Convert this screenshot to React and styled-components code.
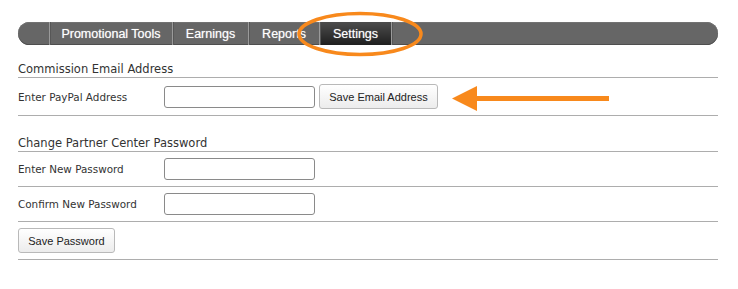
import React from "react";
import styled, { createGlobalStyle } from "styled-components";

const GlobalStyle = createGlobalStyle`
  body {
    margin: 0;
    background: #fff;
  }
`;

const Page = styled.div`
  position: relative;
  width: 700px;
  padding: 22px 20px 0 18px;
  font-family: "DejaVu Sans", Verdana, sans-serif;
  color: #333;
`;

const NavBar = styled.nav`
  display: flex;
  height: 23px;
  background: #666;
  border-radius: 12px;
  box-shadow: inset 0 -1px 0 #4e4e4e, inset 0 1px 0 #727272;
  overflow: hidden;
`;

const NavCap = styled.div`
  width: 31px;
  flex: none;
`;

const Tab = styled.div`
  box-sizing: border-box;
  width: ${(p) => p.$w}px;
  flex: none;
  display: flex;
  align-items: center;
  justify-content: center;
  border-left: 1px solid #9a9a9a;
  box-shadow: inset 1px 0 0 #575757;
  background: ${(p) =>
    p.$active ? "linear-gradient(#4d4d4d, #1f1f1f)" : "transparent"};
  color: #fff;
  font-family: "Liberation Sans", Arial, sans-serif;
  font-size: 12.5px;
  text-shadow: 0 0 1px rgba(255, 255, 255, 0.6);
`;

const TabEnd = styled.div`
  flex: 1;
  border-left: 1px solid #9a9a9a;
  box-shadow: inset 1px 0 0 #575757;
`;

const SectionTitle = styled.h2`
  margin: ${(p) => p.$top}px 0 0;
  height: 16px;
  line-height: 16px;
  font-size: 11.5px;
  font-weight: normal;
  border-bottom: 1px solid #adadad;
`;

const Row = styled.div`
  display: flex;
  align-items: center;
  height: ${(p) => p.$h}px;
  border-bottom: 1px solid #adadad;
`;

const Label = styled.label`
  width: 146px;
  flex: none;
  font-size: 10.4px;
`;

const Input = styled.input`
  box-sizing: border-box;
  width: 151px;
  height: 22px;
  margin: 0;
  border: 1px solid #8a8a8a;
  border-radius: 3px;
  background: #fff;
`;

const Button = styled.button`
  box-sizing: border-box;
  height: 25px;
  width: ${(p) => p.$w}px;
  margin: 0 0 0 ${(p) => p.$ml || 0}px;
  padding: 0;
  border: 1px solid #b9b9b9;
  border-radius: 3px;
  background: linear-gradient(#ffffff, #ececec);
  color: #222;
  font-family: "Liberation Sans", Arial, sans-serif;
  font-size: 11px;
`;

const Overlay = styled.svg`
  position: absolute;
  left: 0;
  top: 0;
  pointer-events: none;
`;

export default function App() {
  return (
    <>
      <GlobalStyle />
      <Page>
        <NavBar>
          <NavCap />
          <Tab $w={123}>Promotional Tools</Tab>
          <Tab $w={76}>Earnings</Tab>
          <Tab $w={71}>Reports</Tab>
          <Tab $w={72} $active>
            Settings
          </Tab>
          <TabEnd />
        </NavBar>

        <SectionTitle $top={16}>Commission Email Address</SectionTitle>
        <Row $h={37}>
          <Label>Enter PayPal Address</Label>
          <Input type="text" />
          <Button $w={119} $ml={4}>
            Save Email Address
          </Button>
        </Row>

        <SectionTitle $top={19}>Change Partner Center Password</SectionTitle>
        <Row $h={34}>
          <Label>Enter New Password</Label>
          <Input type="password" />
        </Row>
        <Row $h={34}>
          <Label>Confirm New Password</Label>
          <Input type="password" />
        </Row>
        <Row $h={37}>
          <Button $w={97}>Save Password</Button>
        </Row>

        <Overlay width="738" height="289" viewBox="0 0 738 289">
          <ellipse
            cx="360"
            cy="34"
            rx="61"
            ry="20.5"
            fill="none"
            stroke="#f8891c"
            strokeWidth="3.5"
          />
          <rect x="470" y="96" width="139" height="5" fill="#f8891c" />
          <polygon points="452,98.5 477,86 477,111" fill="#f8891c" />
        </Overlay>
      </Page>
    </>
  );
}
